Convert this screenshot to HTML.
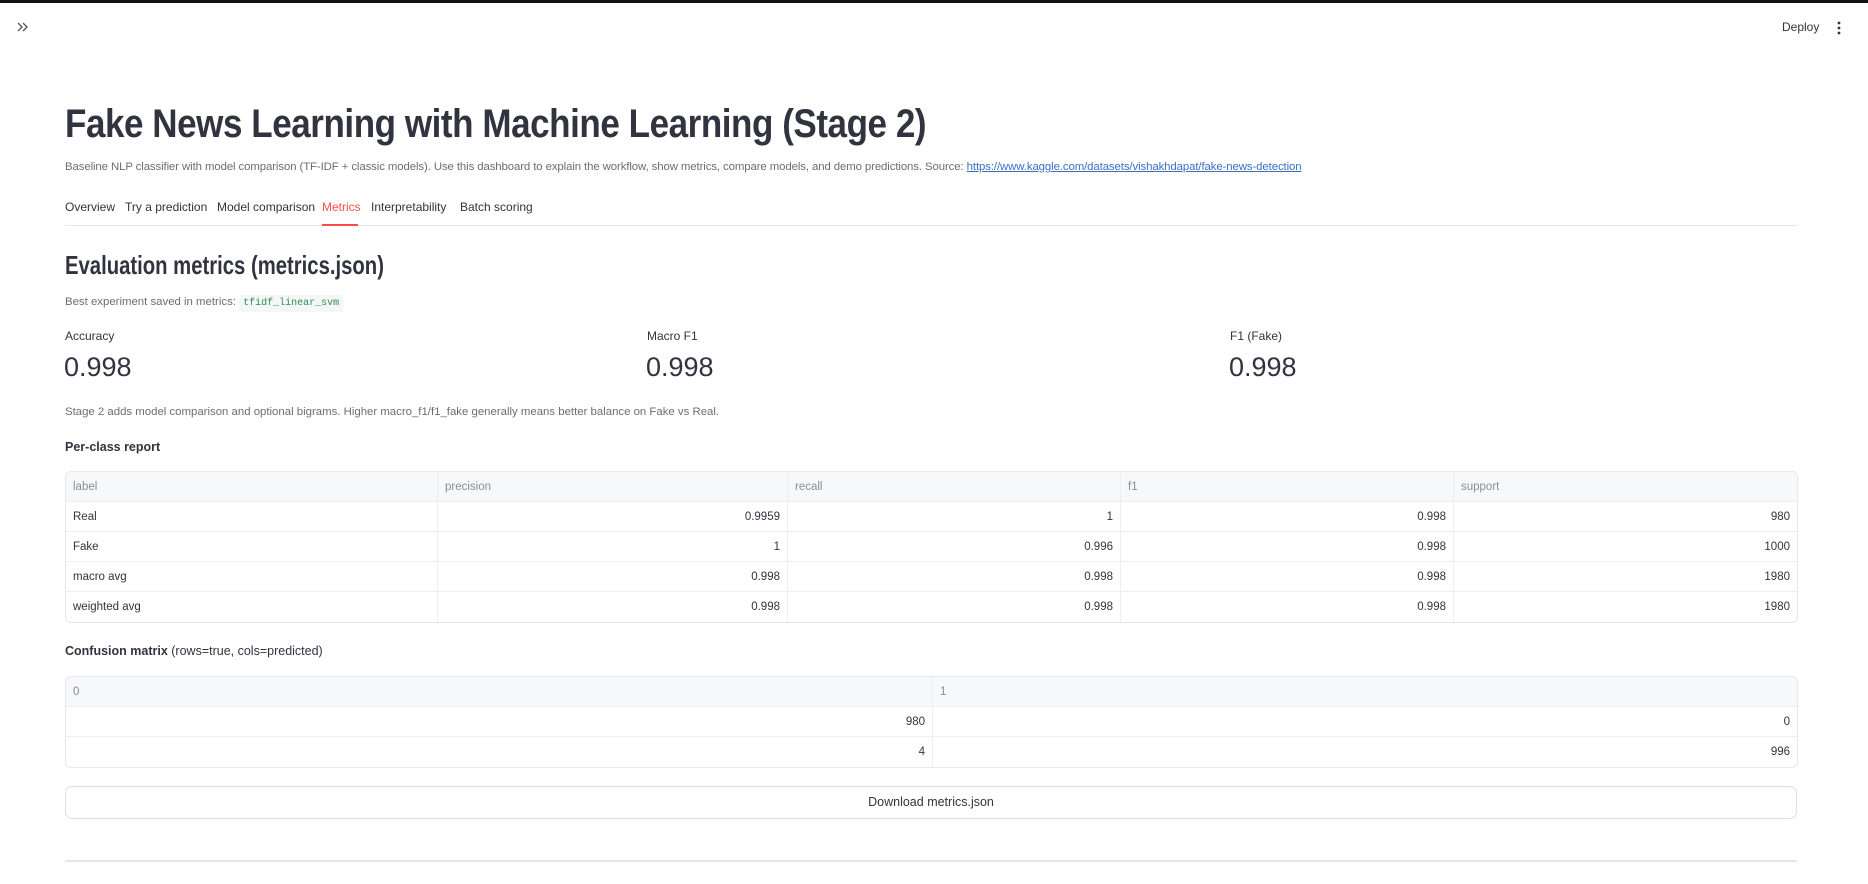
<!DOCTYPE html>
<html><head><meta charset="utf-8"><style>
*{box-sizing:border-box;margin:0;padding:0}
body{width:1868px;height:884px;background:#fff;font-family:"Liberation Sans",sans-serif;color:#31333f;position:relative;overflow:hidden}
.a{position:absolute;white-space:nowrap}
.topbar{position:absolute;left:0;top:0;width:1868px;height:3px;background:#111}
.title{left:65px;top:102px;font-size:40px;font-weight:bold;transform:scaleX(0.875);transform-origin:left;letter-spacing:-0.5px}
.sub{left:65px;top:161px;font-size:11.4px;color:#6b6d76;letter-spacing:-0.1px}
.sub a{color:#3b6fc4;text-decoration:underline}
.tab{top:200px;font-size:12px;color:#31333f}
.h2{left:65px;top:250px;font-size:26px;font-weight:600;transform:scaleX(0.78);transform-origin:left}
.sm{font-size:11.4px;color:#6b6d76}
code{font-family:"Liberation Mono",monospace;font-size:10px;color:#2e8b57;background:#f5f7f6;padding:3px 4px;border-radius:3px}
.ml{top:329px;font-size:12px}
.mv{top:352px;font-size:27px;font-weight:300}
.b{font-weight:bold;font-size:12.5px}
table{position:absolute;border-collapse:separate;border-spacing:0;border:1px solid #e6e7ea;border-radius:6px;overflow:hidden;font-size:11.5px}
td,th{border-right:1px solid #eceef1;border-bottom:1px solid #eceef1;height:30px;padding:0 7px;text-align:right;font-weight:normal}
th{background:#f7f8fa;color:#8a8c94;text-align:left;height:30px}
td:first-child{text-align:left}
tr td:last-child,tr th:last-child{border-right:none}
tr:last-child td{border-bottom:none}
.btn{position:absolute;left:65px;top:786px;width:1732px;height:33px;border:1px solid #dcdee2;border-radius:7px;text-align:center;line-height:31px;font-size:12.5px}
</style></head><body>
<div class="topbar"></div>
<svg class="a" style="left:16px;top:20px" width="14" height="14" viewBox="0 0 14 14"><path d="M2 3l4 4-4 4M7 3l4 4-4 4" fill="none" stroke="#555" stroke-width="1.3"/></svg>
<div class="a" style="left:1782px;top:20px;font-size:12px">Deploy</div>
<svg class="a" style="left:1835px;top:20px" width="8" height="16"><circle cx="4" cy="3" r="1.4" fill="#333"/><circle cx="4" cy="8" r="1.4" fill="#333"/><circle cx="4" cy="13" r="1.4" fill="#333"/></svg>

<div class="a title">Fake News Learning with Machine Learning (Stage 2)</div>
<div class="a sub">Baseline NLP classifier with model comparison (TF-IDF + classic models). Use this dashboard to explain the workflow, show metrics, compare models, and demo predictions. Source: <a>https://www.kaggle.com/datasets/vishakhdapat/fake-news-detection</a></div>

<div class="a tab" style="left:65px">Overview</div>
<div class="a tab" style="left:125px">Try a prediction</div>
<div class="a tab" style="left:217px">Model comparison</div>
<div class="a tab" style="left:322px;color:#ff4b4b">Metrics</div>
<div class="a tab" style="left:371px">Interpretability</div>
<div class="a tab" style="left:460px">Batch scoring</div>
<div class="a" style="left:65px;top:225px;width:1732px;height:1px;background:#e6e7ea"></div>
<div class="a" style="left:322px;top:224px;width:36px;height:2px;background:#ff4b4b"></div>

<div class="a h2">Evaluation metrics (metrics.json)</div>
<div class="a sm" style="left:65px;top:296px">Best experiment saved in metrics: <code>tfidf_linear_svm</code></div>

<div class="a ml" style="left:65px">Accuracy</div>
<div class="a ml" style="left:647px">Macro F1</div>
<div class="a ml" style="left:1230px">F1 (Fake)</div>
<div class="a mv" style="left:64px">0.998</div>
<div class="a mv" style="left:646px">0.998</div>
<div class="a mv" style="left:1229px">0.998</div>

<div class="a sm" style="left:65px;top:406px">Stage 2 adds model comparison and optional bigrams. Higher macro_f1/f1_fake generally means better balance on Fake vs Real.</div>
<div class="a b" style="left:65px;top:440px">Per-class report</div>

<table style="left:65px;top:471px;width:1733px">
<tr><th style="width:372px">label</th><th style="width:350px">precision</th><th style="width:333px">recall</th><th style="width:333px">f1</th><th>support</th></tr>
<tr><td>Real</td><td>0.9959</td><td>1</td><td>0.998</td><td>980</td></tr>
<tr><td>Fake</td><td>1</td><td>0.996</td><td>0.998</td><td>1000</td></tr>
<tr><td>macro avg</td><td>0.998</td><td>0.998</td><td>0.998</td><td>1980</td></tr>
<tr><td>weighted avg</td><td>0.998</td><td>0.998</td><td>0.998</td><td>1980</td></tr>
</table>

<div class="a" style="left:65px;top:644px;font-size:12.5px"><b>Confusion matrix</b> (rows=true, cols=predicted)</div>

<table style="left:65px;top:676px;width:1733px">
<tr><th style="width:867px">0</th><th>1</th></tr>
<tr><td style="text-align:right">980</td><td>0</td></tr>
<tr><td style="text-align:right">4</td><td>996</td></tr>
</table>

<div class="btn">Download metrics.json</div>
<div class="a" style="left:65px;top:860px;width:1732px;height:2px;background:#e6e7ea"></div>
</body></html>
